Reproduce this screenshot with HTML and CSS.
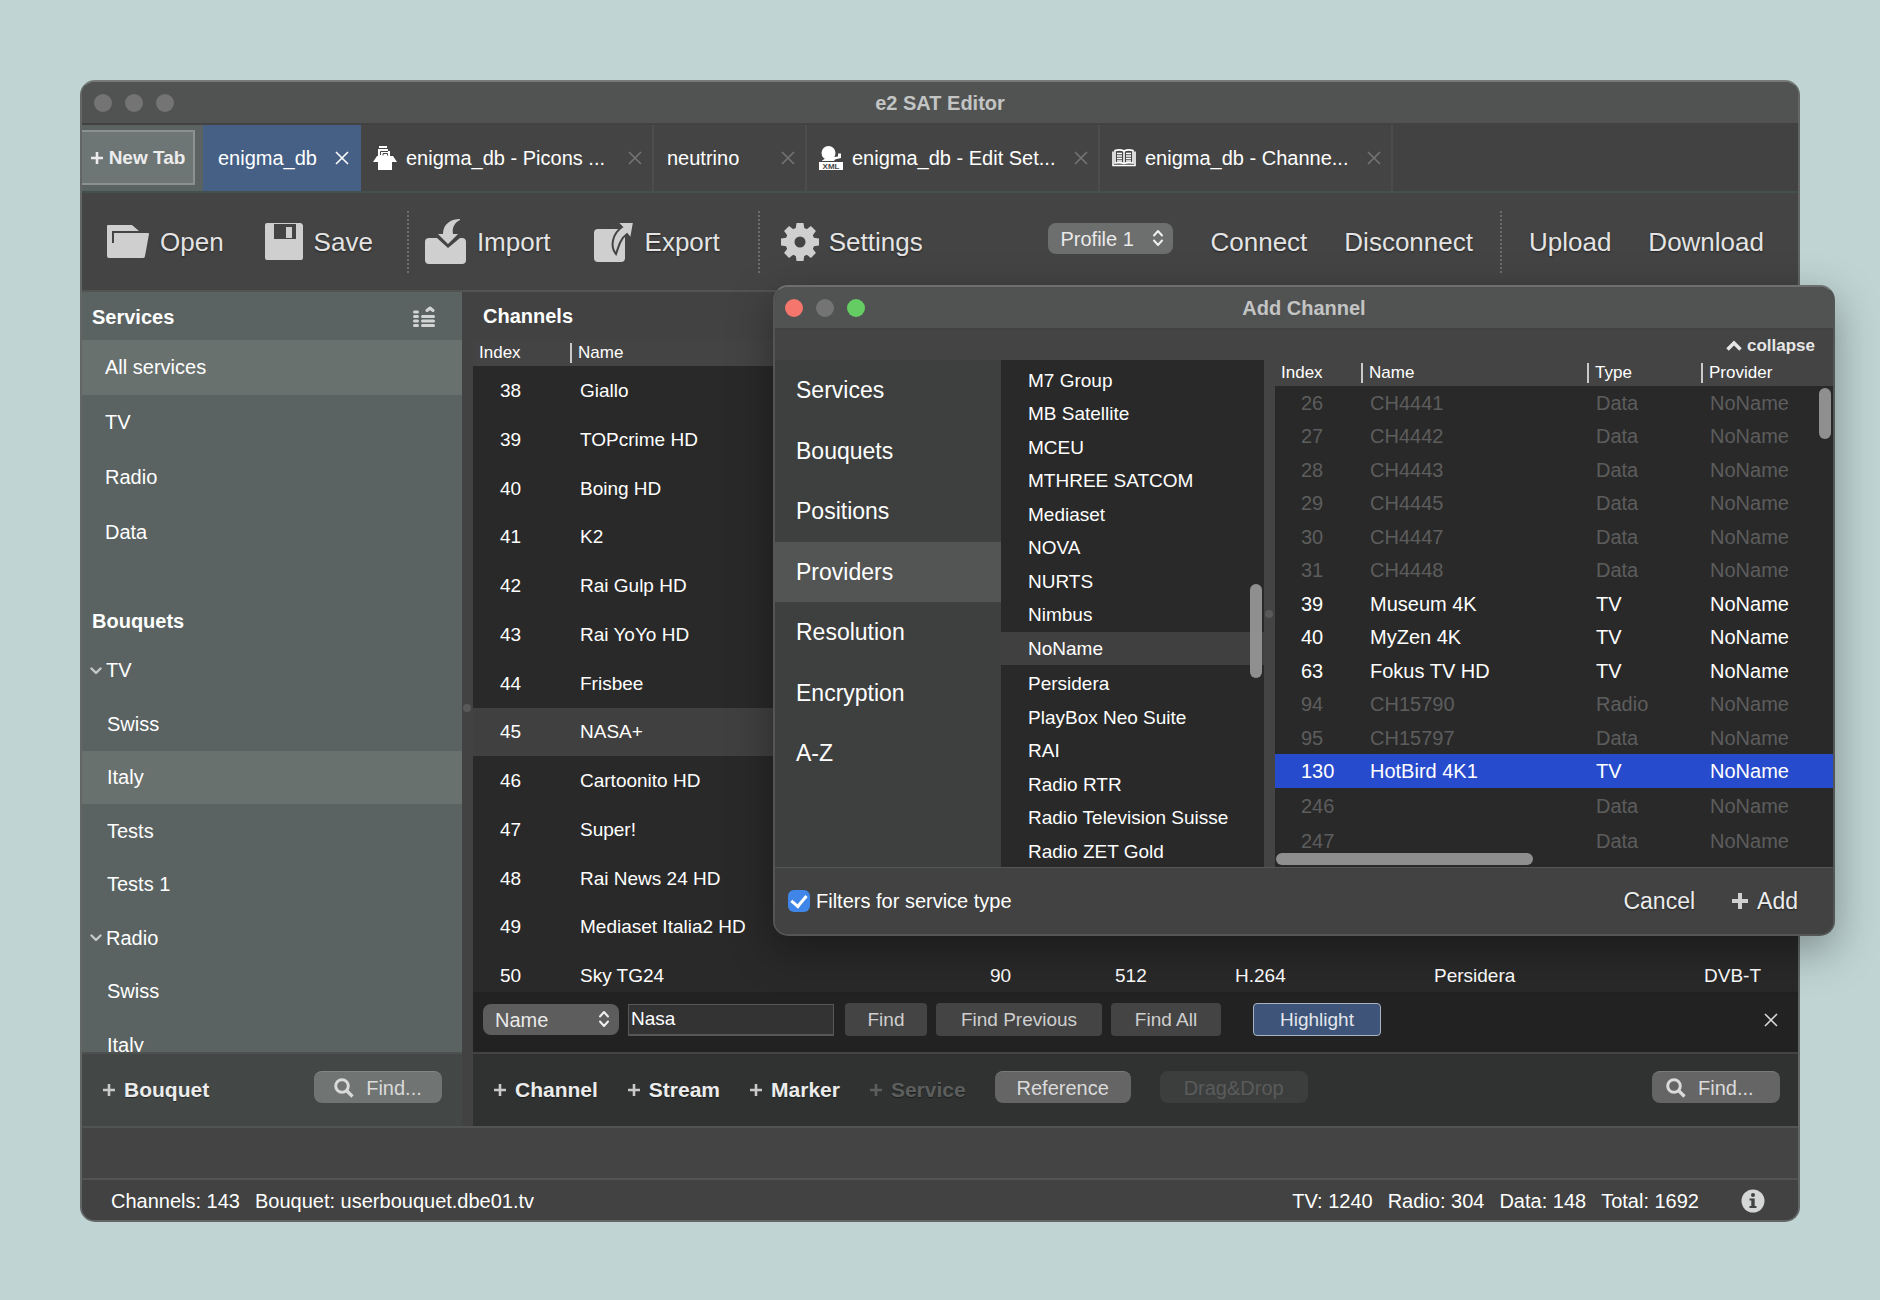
FILE: index.html
```html
<!DOCTYPE html>
<html lang="en">
<head>
<meta charset="utf-8">
<title>e2 SAT Editor</title>
<meta name="viewport" content="width=device-width, initial-scale=1">
<link rel="stylesheet" href="styles.css">
</head>
<body>
<svg class="sprite" aria-hidden="true">
  <symbol id="i-close" viewBox="0 0 14 14"><path d="M1 1L13 13M13 1L1 13" fill="none" stroke="currentColor" stroke-width="1.6"/></symbol>
  <symbol id="i-plus" viewBox="0 0 14 14"><path d="M7 1V13M1 7H13" fill="none" stroke="currentColor" stroke-width="2.6"/></symbol>
  <symbol id="i-plus-bold" viewBox="0 0 18 18"><path d="M9 1V17M1 9H17" fill="none" stroke="currentColor" stroke-width="4"/></symbol>
  <symbol id="i-updown" viewBox="0 0 12 18"><path d="M2 6.500L6 2L10 6.500M2 11.500L6 16L10 11.500" fill="none" stroke="currentColor" stroke-width="2" stroke-linecap="round" stroke-linejoin="round"/></symbol>
  <symbol id="i-chevron" viewBox="0 0 12 8"><path d="M1.500 1.500L6 6L10.500 1.500" fill="none" stroke="currentColor" stroke-width="2.400" stroke-linecap="round" stroke-linejoin="round"/></symbol>
  <symbol id="i-search" viewBox="0 0 20 20"><circle cx="8" cy="8" r="6.300" fill="none" stroke="currentColor" stroke-width="3"/><path d="M12.500 12.500L18.500 18.500" stroke="currentColor" stroke-width="3.200"/></symbol>
</svg>

<main class="window">
  <header class="titlebar">
    <div class="lights"><i class="light"></i><i class="light"></i><i class="light"></i></div>
    <h1 class="title">e2 SAT Editor</h1>
  </header>

  <nav class="tabs">
    <div class="newtab-wrap"><button class="newtab"><svg width="14" height="14"><use href="#i-plus"/></svg>New Tab</button></div>
    <div class="tab tab-first active"><span>enigma_db</span><button class="x" aria-label="Close"><svg width="14" height="14"><use href="#i-close"/></svg></button></div>
    <div class="tab tab-wide">
      <svg class="tab-icon" width="24" height="24" viewBox="0 0 24 24" fill="#fff"><path d="M6 0H14V2H6ZM5 3H15V5H17V10H20L24 16H19V24H5V16H0L4 10H5Z"/><path d="M7.500 9V5.500H15M10 9.500V7.500H14.500V9.500" fill="none" stroke="#444"/></svg>
      <span>enigma_db - Picons ...</span><button class="x" aria-label="Close"><svg width="14" height="14"><use href="#i-close"/></svg></button></div>
    <div class="tab tab-small"><span>neutrino</span><button class="x" aria-label="Close"><svg width="14" height="14"><use href="#i-close"/></svg></button></div>
    <div class="tab tab-wide">
      <svg class="tab-icon" width="24" height="24" viewBox="0 0 24 24" fill="#fff"><circle cx="9.500" cy="7" r="7"/><path d="M3 14.500L9 11H15L19 10.500L19 7.500H22V12L16 13.500L15 15H3Z"/><path d="M0 16H24V24H0Z"/><text x="12" y="23" text-anchor="middle" font-family="Liberation Sans, sans-serif" font-weight="700" font-size="8" fill="#444">XML</text></svg>
      <span>enigma_db - Edit Set...</span><button class="x" aria-label="Close"><svg width="14" height="14"><use href="#i-close"/></svg></button></div>
    <div class="tab tab-wide">
      <svg class="tab-icon" width="24" height="18" viewBox="0 0 24 18" fill="none" stroke="#fff"><path d="M3 1.500Q8 0 12 2Q16 0 21 1.500V14Q16 13 12 14.500Q8 13 3 14Z" stroke-width="1.600"/><path d="M12 2V14M1 2.500V16.500H23V2.500" stroke-width="1.600"/><path d="M5 4.500H10M5 7H10M5 9.500H10M5 12H10M14 4.500H19M14 7H19M14 9.500H19M14 12H19" stroke-width="1.300"/></svg>
      <span>enigma_db - Channe...</span><button class="x" aria-label="Close"><svg width="14" height="14"><use href="#i-close"/></svg></button></div>
  </nav>

  <div class="toolbar">
    <div class="tools">
      <button class="tool"><svg width="42" height="33" viewBox="0 0 42 33" fill="currentColor"><path d="M0 1Q0 0 1 0H25L32 6H5V18H7V8H41Q42 8 42 9L38 31Q38 33 36 33H2Q0 33 0 31Z"/></svg>Open</button>
      <button class="tool"><svg width="38" height="37" viewBox="0 0 38 37" fill="currentColor"><path fill-rule="evenodd" d="M2 0H36L38 2V35Q38 37 36 37H2Q0 37 0 35V2Q0 0 2 0ZM9 1V16H31V1ZM21 4H27V15H21Z"/></svg>Save</button>
    </div>
    <div class="tools tools-io">
      <button class="tool"><svg width="41" height="45" viewBox="0 0 41 45" fill="currentColor"><path d="M35 0C27 0 18 4 18 15H13L23 25L33 15H28C27 9 29 4 35 1Z"/><path d="M4 19H12L23 29L35 19H37Q41 19 41 23V41Q41 45 37 45H4Q0 45 0 41V23Q0 19 4 19Z"/></svg>Import</button>
      <button class="tool"><svg width="40" height="40" viewBox="0 0 40 40" fill="currentColor"><rect y="7" width="31" height="33" rx="4"/><path d="M23 0H40L37 17L33 12C27 16 25 23 22 32C16 25 18 12 28 5Z" stroke="#434443" stroke-width="2"/></svg>Export</button>
    </div>
    <div class="tools">
      <button class="tool tool-set"><svg width="40" height="40" viewBox="-20 -20 40 40" fill="currentColor"><circle r="10" fill="none" stroke="currentColor" stroke-width="9"/><g id="t"><path id="k" d="M-3.500 -19H3.500L4.500 -12H-4.500Z"/><use href="#k" transform="rotate(45)"/><use href="#k" transform="rotate(90)"/><use href="#k" transform="rotate(135)"/></g><use href="#t" transform="rotate(180)"/></svg>Settings</button>
    </div>
    <div class="tools tools-right">
      <label class="pick pick-profile"><select aria-label="Profile"><option>Profile 1</option></select><svg width="12" height="18"><use href="#i-updown"/></svg></label>
      <button class="tool">Connect</button>
      <button class="tool">Disconnect</button>
    </div>
    <div class="tools tools-end">
      <button class="tool">Upload</button>
      <button class="tool">Download</button>
    </div>
  </div>

  <div class="content">
    <aside class="sidebar">
      <div class="side-scroll">
        <div class="side-head"><h2>Services</h2>
          <svg width="22" height="22" viewBox="0 0 22 22" fill="none" stroke="#d2d4d3" stroke-width="3" stroke-linecap="round"><path d="M1.500 6H4.500M1.500 10.500H4.500M1.500 15H4.500M1.500 19.500H4.500M9.500 10.500H20.500M9.500 15H20.500M9.500 19.500H20.500"/><path d="M14 4.500L17 2L20 4.500" stroke-linejoin="round"/></svg>
        </div>
        <ul class="services">
          <li><a href="#" class="selected">All services</a></li>
          <li><a href="#">TV</a></li>
          <li><a href="#">Radio</a></li>
          <li><a href="#">Data</a></li>
        </ul>
        <div class="side-head side-head-b"><h2>Bouquets</h2></div>
        <ul class="tree">
          <li><a href="#" class="group"><svg width="12" height="8"><use href="#i-chevron"/></svg>TV</a></li>
          <li><a href="#">Swiss</a></li>
          <li><a href="#" class="selected">Italy</a></li>
          <li><a href="#">Tests</a></li>
          <li><a href="#">Tests 1</a></li>
          <li><a href="#" class="group"><svg width="12" height="8"><use href="#i-chevron"/></svg>Radio</a></li>
          <li><a href="#">Swiss</a></li>
          <li><a href="#">Italy</a></li>
        </ul>
      </div>
      <div class="side-foot">
        <button class="add"><svg width="14" height="14"><use href="#i-plus"/></svg>Bouquet</button>
        <button class="pill pill-find"><svg width="20" height="20"><use href="#i-search"/></svg>Find...</button>
      </div>
    </aside>
    <div class="splitter"><i class="dot"></i></div>
    <section class="channels">
      <h2 class="channels-title">Channels</h2>
      <div class="table-wrap">
        <table class="grid main-grid">
          <colgroup><col class="m1"><col class="m2"><col class="m3"><col class="m4"><col class="m5"><col class="m6"><col class="m7"></colgroup>
          <thead><tr><th>Index</th><th><span>Name</span></th><th></th><th></th><th></th><th></th><th></th></tr></thead>
          <tbody>
            <tr><td>38</td><td>Giallo</td><td colspan="5"></td></tr>
            <tr><td>39</td><td>TOPcrime HD</td><td colspan="5"></td></tr>
            <tr><td>40</td><td>Boing HD</td><td colspan="5"></td></tr>
            <tr><td>41</td><td>K2</td><td colspan="5"></td></tr>
            <tr><td>42</td><td>Rai Gulp HD</td><td colspan="5"></td></tr>
            <tr><td>43</td><td>Rai YoYo HD</td><td colspan="5"></td></tr>
            <tr><td>44</td><td>Frisbee</td><td colspan="5"></td></tr>
            <tr class="current"><td>45</td><td>NASA+</td><td colspan="5"></td></tr>
            <tr><td>46</td><td>Cartoonito HD</td><td colspan="5"></td></tr>
            <tr><td>47</td><td>Super!</td><td colspan="5"></td></tr>
            <tr><td>48</td><td>Rai News 24 HD</td><td colspan="5"></td></tr>
            <tr><td>49</td><td>Mediaset Italia2 HD</td><td colspan="5"></td></tr>
            <tr><td>50</td><td>Sky TG24</td><td>90</td><td>512</td><td>H.264</td><td>Persidera</td><td>DVB-T</td></tr>
          </tbody>
        </table>
      </div>
      <form class="findbar">
        <label class="pick pick-name"><select aria-label="Search field"><option>Name</option></select><svg width="12" height="18"><use href="#i-updown"/></svg></label>
        <input class="query" type="text" value="Nasa" aria-label="Search text">
        <button type="button" class="flat flat-find">Find</button>
        <button type="button" class="flat flat-prev">Find Previous</button>
        <button type="button" class="flat flat-all">Find All</button>
        <button type="button" class="flat flat-on">Highlight</button>
        <button type="button" class="x find-x" aria-label="Close"><svg width="14" height="14"><use href="#i-close"/></svg></button>
      </form>
      <div class="actions">
        <button class="add"><svg width="14" height="14"><use href="#i-plus"/></svg>Channel</button>
        <button class="add"><svg width="14" height="14"><use href="#i-plus"/></svg>Stream</button>
        <button class="add"><svg width="14" height="14"><use href="#i-plus"/></svg>Marker</button>
        <button class="add" disabled><svg width="14" height="14"><use href="#i-plus"/></svg>Service</button>
        <button class="pill pill-ref">Reference</button>
        <button class="pill pill-drag" disabled>Drag&amp;Drop</button>
        <button class="pill pill-find pill-end"><svg width="20" height="20"><use href="#i-search"/></svg>Find...</button>
      </div>
    </section>
  </div>

  <div class="spacer"></div>
  <footer class="status">
    <span>Channels: 143</span><span>Bouquet: userbouquet.dbe01.tv</span>
    <span class="push">TV: 1240</span><span>Radio: 304</span><span>Data: 148</span><span>Total: 1692</span>
    <button class="info" aria-label="Info"><svg width="24" height="24" viewBox="0 0 24 24"><circle cx="12" cy="12" r="11.500" fill="#d5d6d6"/><g fill="#414241"><circle cx="12" cy="6" r="2"/><path d="M8.500 9.500H13.700V17H15.500V19H8.500V17H10.300V11.500H8.500Z"/></g></svg></button>
  </footer>
</main>

<section class="dialog" role="dialog" aria-labelledby="dlg-title">
  <header class="titlebar">
    <div class="lights"><i class="light red"></i><i class="light"></i><i class="light green"></i></div>
    <h2 class="title" id="dlg-title">Add Channel</h2>
  </header>
  <div class="collapse-row"><button class="collapse"><svg width="16" height="11" viewBox="0 0 16 11"><path d="M1.500 9.500L8 3L14.500 9.500" fill="none" stroke="currentColor" stroke-width="3.500"/></svg>collapse</button></div>
  <div class="dlg-body">
    <ul class="cats">
      <li><a href="#">Services</a></li>
      <li><a href="#">Bouquets</a></li>
      <li><a href="#">Positions</a></li>
      <li><a href="#" class="selected">Providers</a></li>
      <li><a href="#">Resolution</a></li>
      <li><a href="#">Encryption</a></li>
      <li><a href="#">A-Z</a></li>
    </ul>
    <div class="providers">
      <ul>
        <li><a href="#">M7 Group</a></li>
        <li><a href="#">MB Satellite</a></li>
        <li><a href="#">MCEU</a></li>
        <li><a href="#">MTHREE SATCOM</a></li>
        <li><a href="#">Mediaset</a></li>
        <li><a href="#">NOVA</a></li>
        <li><a href="#">NURTS</a></li>
        <li><a href="#">Nimbus</a></li>
        <li class="selected"><a href="#">NoName</a></li>
        <li><a href="#">Persidera</a></li>
        <li><a href="#">PlayBox Neo Suite</a></li>
        <li><a href="#">RAI</a></li>
        <li><a href="#">Radio RTR</a></li>
        <li><a href="#">Radio Television Suisse</a></li>
        <li><a href="#">Radio ZET Gold</a></li>
      </ul>
      <i class="bar bar-providers"></i>
    </div>
    <div class="splitter"><i class="dot dot-dlg"></i></div>
    <div class="results">
      <table class="grid dlg-grid">
        <colgroup><col class="d1"><col class="d2"><col class="d3"><col class="d4"></colgroup>
        <thead><tr><th>Index</th><th><span>Name</span></th><th><span>Type</span></th><th><span>Provider</span></th></tr></thead>
        <tbody>
          <tr class="off"><td>26</td><td>CH4441</td><td>Data</td><td>NoName</td></tr>
          <tr class="off"><td>27</td><td>CH4442</td><td>Data</td><td>NoName</td></tr>
          <tr class="off"><td>28</td><td>CH4443</td><td>Data</td><td>NoName</td></tr>
          <tr class="off"><td>29</td><td>CH4445</td><td>Data</td><td>NoName</td></tr>
          <tr class="off"><td>30</td><td>CH4447</td><td>Data</td><td>NoName</td></tr>
          <tr class="off"><td>31</td><td>CH4448</td><td>Data</td><td>NoName</td></tr>
          <tr><td>39</td><td>Museum 4K</td><td>TV</td><td>NoName</td></tr>
          <tr><td>40</td><td>MyZen 4K</td><td>TV</td><td>NoName</td></tr>
          <tr><td>63</td><td>Fokus TV HD</td><td>TV</td><td>NoName</td></tr>
          <tr class="off"><td>94</td><td>CH15790</td><td>Radio</td><td>NoName</td></tr>
          <tr class="off"><td>95</td><td>CH15797</td><td>Data</td><td>NoName</td></tr>
          <tr class="picked"><td>130</td><td>HotBird 4K1</td><td>TV</td><td>NoName</td></tr>
          <tr class="off"><td>246</td><td></td><td>Data</td><td>NoName</td></tr>
          <tr class="off"><td>247</td><td></td><td>Data</td><td>NoName</td></tr>
          <tr class="off"><td>248</td><td></td><td>Data</td><td>NoName</td></tr>
        </tbody>
      </table>
      <i class="bar bar-v"></i>
      <i class="bar bar-h"></i>
    </div>
  </div>
  <footer class="dlg-foot">
    <label class="check"><input type="checkbox" checked>Filters for service type</label>
    <button class="dlg-btn dlg-cancel">Cancel</button>
    <button class="dlg-btn"><svg width="18" height="18"><use href="#i-plus-bold"/></svg>Add</button>
  </footer>
</section>
</body>
</html>
```
FILE: styles.css
```css
* { box-sizing: border-box; }

body {
  position: relative;
  margin: 0;
  min-height: 100vh;
  padding: 80px;
  background: #c0d4d4;
  color: #fff;
  font: 20px/24px "Liberation Sans", Arial, sans-serif;
}

button, input, select { font: inherit; color: inherit; }
button { border: 0; padding: 0; background: none; white-space: nowrap; }
a { color: inherit; text-decoration: none; }
ul { margin: 0; padding: 0; list-style: none; }
h1, h2 { margin: 0; font-size: 20px; line-height: 24px; font-weight: 700; }
svg { display: block; flex: none; }
.sprite { position: absolute; width: 0; height: 0; }

/* window frame */
.window {
  display: flex;
  flex-direction: column;
  height: calc(100vh - 158px);
  border: 2px solid #626766;
  border-top-color: #767b79;
  border-radius: 15px;
  overflow: hidden;
  background: #434443;
}
.titlebar {
  display: grid;
  grid-template-columns: 1fr auto 1fr;
  align-items: center;
  flex: none;
  height: 43px;
  padding: 0 12px;
  border-bottom: 2px solid #414241;
  background: #515352;
}
.dialog .titlebar { padding: 0 10px; }
.title { color: #c3c4c4; }
.lights { display: flex; gap: 13px; }
.light { width: 18px; height: 18px; border-radius: 50%; background: #737473; }
.red { background: #f4766c; }
.green { background: #65cc63; }

/* tabs */
.tabs {
  display: flex;
  flex: none;
  height: 68px;
  border-bottom: 2px solid #425150;
  background: #414241;
}
.newtab-wrap { display: flex; width: 121px; padding: 5px 8px 6px 0; background: #5a6362; }
.newtab {
  display: flex;
  align-items: center;
  justify-content: center;
  gap: 5px;
  flex: 1;
  border: 2px solid #8a9190;
  border-left: 0;
  background: #6d7675;
  color: #ececec;
  font-size: 19px;
  font-weight: 700;
}
.tab {
  display: flex;
  align-items: center;
  padding: 0 10px 0 12px;
  border-right: 2px solid #4c4c4c;
  background: #444;
}
.tab-first { width: 158px; padding-left: 15px; }
.tab-wide { width: 293px; }
.tab-small { width: 153px; padding-left: 13px; }
.tab.active { border-right-color: #455f85; background: #455f85; }
.tab-icon { margin-right: 9px; }
.x { margin-left: auto; color: #747474; }
.active .x { color: #fff; }

/* toolbar */
.toolbar {
  display: flex;
  align-items: center;
  flex: none;
  height: 99px;
  padding: 0 34px 0 25px;
  border-bottom: 2px solid #525452;
  background: #434443;
}
.tools {
  display: flex;
  align-items: center;
  gap: 41px;
  height: 62px;
}
.tools + .tools { margin-left: 34px; padding-left: 16px; border-left: 2px dotted #6c6d6c; }
.tools.tools-io { gap: 43px; margin-right: 4px; }
.tools.tools-right { flex: 1; justify-content: flex-end; gap: 37px; border: 0; }
.tools.tools-end { gap: 37px; margin-left: 27px; padding-left: 27px; }
.tool {
  display: flex;
  align-items: center;
  gap: 11px;
  color: #e4e4e4;
  font-size: 26px;
  line-height: 30px;
  text-shadow: 0 1px 2px rgba(0, 0, 0, .5);
}
.tool svg { color: #cfcfcf; }
.tool-set { gap: 9px; padding-left: 4px; }
.pick { position: relative; display: block; }
.pick select {
  appearance: none;
  display: block;
  width: 100%;
  height: 31px;
  padding: 0 12px;
  border: 0;
  border-radius: 8px;
  color: #e9e9e9;
  line-height: 28px;
}
.pick svg { position: absolute; right: 9px; top: 6px; color: #eee; pointer-events: none; }
.pick-profile { width: 125px; margin-bottom: 6px; }
.pick-profile select { background: #6d6f6e; }

/* content */
.content { display: flex; flex: 1; min-height: 0; }
.sidebar { display: flex; flex-direction: column; width: 380px; background: #5a6362; }
.side-scroll { flex: 1; min-height: 0; overflow: hidden; }
.side-head {
  display: flex;
  align-items: center;
  justify-content: space-between;
  height: 48px;
  padding: 2px 27px 0 10px;
}
.side-head-b { height: 84px; padding-top: 38px; }
.services { font-size: 20px; }
.services a { display: block; padding: 0 23px; line-height: 55px; }
.tree a { display: block; padding: 0 25px; line-height: 53px; }
.tree li:nth-child(even) a { line-height: 54px; }
.tree .group { display: flex; align-items: center; gap: 4px; padding: 0 8px; }
.tree svg { color: #c4c8c7; }
.sidebar .selected { background: #69716f; }
.side-foot {
  display: flex;
  align-items: center;
  justify-content: space-between;
  flex: none;
  height: 74px;
  padding: 0 20px;
  border-top: 2px solid #4d5251;
  background: #434847;
}
.splitter { position: relative; flex: none; width: 11px; background: #414241; }
.dot { position: absolute; top: 412px; left: 1px; width: 8px; height: 8px; border-radius: 50%; background: #585958; }

.channels { display: flex; flex-direction: column; flex: 1; min-width: 0; background: #414241; }
.channels-title { flex: none; height: 48px; padding-left: 10px; line-height: 48px; }
.table-wrap { flex: 1; min-height: 0; overflow: hidden; background: #292929; }

.grid { width: 100%; table-layout: fixed; border-collapse: collapse; }
.grid th {
  height: 26px;
  padding: 0 0 1px;
  background: #444;
  font-size: 17px;
  line-height: 20px;
  font-weight: 400;
  text-align: left;
}
.grid th:first-child { padding-left: 6px; }
.grid th span { display: block; padding-left: 6px; border-left: 2px solid #c9c9c9; }
.grid td { padding: 0 0 0 9px; white-space: nowrap; }
.grid td:first-child { padding-left: 26px; }

.main-grid td { height: 49px; padding-left: 10px; font-size: 19px; }
.main-grid td:first-child { padding-left: 27px; }
.main-grid tr:nth-child(4n) td { height: 48px; }
.main-grid .current { background: #404040; }
.m1 { width: 97px; }
.m2 { width: 410px; }
.m3 { width: 125px; }
.m4 { width: 120px; }
.m5 { width: 199px; }
.m6 { width: 270px; }

.findbar {
  display: flex;
  align-items: center;
  gap: 9px;
  flex: none;
  height: 60px;
  padding: 0 20px 5px 10px;
  background: #222;
}
.pick-name { width: 136px; }
.pick-name select { background: #5d5d5d; }
.query {
  width: 206px;
  height: 32px;
  padding: 0 2px;
  border: 1px solid #575757;
  border-bottom-width: 2px;
  background: #333;
  font-size: 19px;
}
.flat { height: 33px; border-radius: 4px; background: #444; color: #cfcfcf; font-size: 19px; }
.flat-find { width: 82px; margin-left: 2px; }
.flat-prev { width: 166px; }
.flat-all { width: 110px; }
.flat-on { width: 128px; margin-left: 23px; border: 1px solid #a9b3c1; background: #3e5579; color: #e2e6ec; }
.find-x { color: #d8d8d8; }

.actions {
  display: flex;
  align-items: center;
  gap: 29px;
  flex: none;
  height: 74px;
  padding: 0 18px 0 20px;
  border-top: 2px solid #424342;
  background: #303231;
}
.add {
  display: flex;
  align-items: center;
  gap: 8px;
  color: #ececec;
  font-size: 21px;
  font-weight: 700;
  text-shadow: 0 1px 1px rgba(0, 0, 0, .4);
}
.add svg { color: #c9c9c9; }
.add:disabled, .add:disabled svg { color: #5c5e5d; }
.pill {
  display: flex;
  align-items: center;
  justify-content: center;
  gap: 12px;
  height: 32px;
  margin-bottom: 6px;
  border-top: 1px solid #7a7a7a;
  border-radius: 8px;
  background: #656565;
  color: #dadada;
}
.pill-find { width: 128px; }
.side-foot .pill-find { background: #707473; border-color: #828685; }
.pill-ref { width: 136px; }
.pill-drag { width: 148px; }
.pill:disabled { border-color: #3c3e3d; background: #3c3e3d; color: #5a5b5b; }
.pill-end { justify-content: flex-start; margin-left: auto; padding-left: 14px; }

.spacer { flex: none; height: 52px; border-top: 2px solid #525452; }
.status {
  display: flex;
  align-items: center;
  gap: 15px;
  flex: none;
  height: 42px;
  padding: 2px 33px 0 29px;
  border-top: 2px solid #525452;
  background: #414241;
}
.push { margin-left: auto; }
.info { margin-left: 27px; }

/* add channel dialog */
.dialog {
  position: absolute;
  top: 285px;
  right: 45px;
  bottom: 366px;
  left: 773px;
  display: flex;
  flex-direction: column;
  border: 2px solid #535655;
  border-top-color: #6c6f6e;
  border-radius: 15px;
  overflow: hidden;
  background: #434443;
  box-shadow: 0 14px 44px rgba(0, 0, 0, .35);
}
.collapse-row { display: flex; justify-content: flex-end; flex: none; height: 30px; padding: 1px 18px 0 0; }
.collapse { display: flex; align-items: center; gap: 5px; color: #e6e6e6; font-size: 17px; font-weight: 700; }
.dlg-body { display: flex; flex: 1; min-height: 0; }
.cats { flex: none; width: 226px; background: #3e403f; font-size: 23px; }
.cats a { display: block; padding-left: 21px; line-height: 60px; }
.cats li:nth-child(odd) a { line-height: 61px; }
.cats .selected { background: #535554; }
.providers { position: relative; flex: none; width: 263px; padding-top: 4px; overflow: hidden; background: #292929; font-size: 19px; }
.providers a { display: block; padding-left: 27px; line-height: 33px; }
.providers li:nth-child(even) a { line-height: 34px; }
.providers .selected { margin-bottom: 2px; background: #404040; }
.bar { position: absolute; border-radius: 6px; background: #8f8f8f; }
.bar-providers { top: 224px; right: 2px; width: 12px; height: 94px; }
.dlg-body .splitter { background: #434443; }
.dot-dlg { top: 250px; }
.results { position: relative; flex: 1; min-width: 0; overflow: hidden; background: #292929; }
.bar-v { top: 28px; right: 2px; width: 12px; height: 51px; }
.bar-h { bottom: 2px; left: 1px; width: 257px; height: 12px; }
.dlg-grid td { height: 33px; }
.dlg-grid tr:nth-child(even) td { height: 34px; }
.dlg-grid .picked { background: #264bcd; }
.dlg-grid .picked + tr td { height: 36px; }
.dlg-grid .off { color: #5d5d5d; }
.d1 { width: 86px; }
.d2 { width: 226px; }
.d3 { width: 114px; }
.dlg-foot {
  display: flex;
  align-items: center;
  flex: none;
  height: 67px;
  padding: 0 35px 0 13px;
  border-top: 1px solid #555756;
  background: #414241;
}
.check { display: flex; align-items: center; gap: 6px; margin-right: auto; }
.check input {
  appearance: none;
  width: 22px;
  height: 22px;
  margin: 0;
  border-radius: 6px;
  background: #3f86e8;
  display: grid;
  place-items: center;
}
.check input::before {
  content: "";
  width: 7px;
  height: 12px;
  margin-bottom: 3px;
  border: solid #fff;
  border-width: 0 3px 3px 0;
  transform: rotate(40deg);
}
.dlg-btn {
  display: flex;
  align-items: center;
  gap: 8px;
  color: #ececec;
  font-size: 23px;
  text-shadow: 0 1px 2px rgba(0, 0, 0, .5);
}
.dlg-btn svg { color: #d0d0d0; }
.dlg-cancel { margin-right: 36px; }
```
